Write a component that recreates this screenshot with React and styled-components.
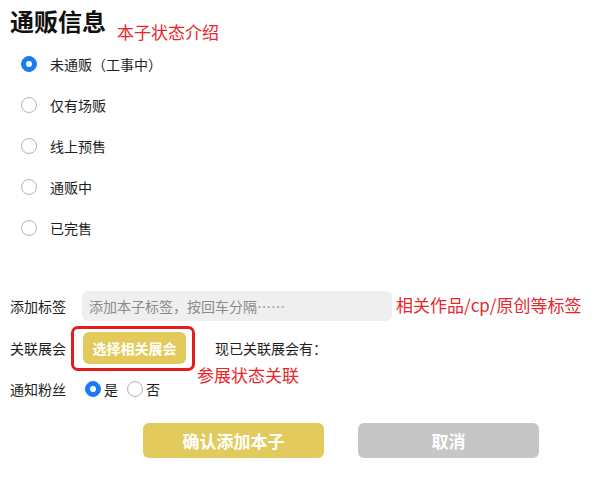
import React, { useState } from "react";
import styled, { createGlobalStyle } from "styled-components";

const GlobalStyle = createGlobalStyle`
  body {
    margin: 0;
    background: #ffffff;
    font-family: "Noto Sans CJK SC", "Noto Sans", sans-serif;
    color: #1e1e1e;
  }
`;

const Page = styled.div`
  width: 600px;
  height: 477px;
  padding: 6px 0 0 10px;
  box-sizing: border-box;
  overflow: hidden;
`;

const Header = styled.div`
  display: flex;
  align-items: flex-end;
  gap: 11px;
  height: 36px;
`;

const Title = styled.h1`
  margin: 0 0 6px;
  font-size: 24px;
  font-weight: 700;
  line-height: 30px;
  color: #111111;
`;

const Note = styled.span`
  color: #e8262b;
  font-size: 17px;
  line-height: 20px;
  white-space: nowrap;
`;

const StatusList = styled.div`
  display: flex;
  flex-direction: column;
  padding: 1px 0 0 11px;
`;

const StatusItem = styled.label`
  display: flex;
  align-items: center;
  gap: 13px;
  height: 41px;
  font-size: 14px;
`;

const Radio = styled.span`
  width: ${(p) => p.size}px;
  height: ${(p) => p.size}px;
  border-radius: 50%;
  box-sizing: border-box;
  flex-shrink: 0;
  background: ${(p) => (p.checked ? "#1a7cf5" : "#ffffff")};
  border: 1px solid ${(p) => (p.checked ? "#1a7cf5" : "#b4b4b4")};
  display: flex;
  align-items: center;
  justify-content: center;
  &::after {
    content: "";
    width: 6px;
    height: 6px;
    border-radius: 50%;
    background: #ffffff;
    display: ${(p) => (p.checked ? "block" : "none")};
  }
`;

const Form = styled.div`
  display: flex;
  flex-direction: column;
  margin-top: 43px;
`;

const Row = styled.div`
  position: relative;
  display: grid;
  grid-template-columns: 72px auto 1fr;
  align-items: center;
  height: ${(p) => p.h}px;
  font-size: 14px;
`;

const Label = styled.span`
  font-size: 14px;
  color: #1e1e1e;
`;

const TagInput = styled.input`
  width: 310px;
  height: 30px;
  border: none;
  border-radius: 6px;
  background: #efefef;
  padding: 0 7px;
  box-sizing: border-box;
  font-family: inherit;
  font-size: 14px;
  color: #222222;
  outline: none;
  &::placeholder {
    color: #8a8a8a;
  }
`;

const HighlightBox = styled.div`
  margin-left: -11px;
  border: 3px solid #e01e1e;
  border-radius: 7px;
  padding: 3px 6px 4px 9px;
`;

const YellowButton = styled.button`
  display: block;
  background: #e2cb5c;
  color: #ffffff;
  border: none;
  border-radius: 6px;
  font-family: inherit;
  font-weight: 700;
  font-size: ${(p) => (p.small ? 14 : 17)}px;
  width: ${(p) => (p.small ? 103 : 181)}px;
  height: ${(p) => (p.small ? 32 : 35)}px;
  padding: 0;
  cursor: pointer;
`;

const GrayButton = styled(YellowButton)`
  background: #c6c6c6;
`;

const Linked = styled.span`
  margin-left: 20px;
  font-size: 14px;
  color: #1e1e1e;
`;

const FloatNote = styled(Note)`
  position: absolute;
  left: ${(p) => p.left}px;
  top: ${(p) => p.top}px;
`;

const FanChoices = styled.div`
  display: flex;
  align-items: center;
  gap: 9px;
  margin-left: 3px;
`;

const FanOption = styled.label`
  display: flex;
  align-items: center;
  gap: 3px;
  font-size: 14px;
`;

const Actions = styled.div`
  display: flex;
  gap: 34px;
  margin: 20px 0 0 133px;
`;

const statuses = ["未通贩（工事中）", "仅有场贩", "线上预售", "通贩中", "已完售"];

export default function App() {
  const [status, setStatus] = useState(0);
  const [notify, setNotify] = useState(true);

  return (
    <Page>
      <GlobalStyle />
      <Header>
        <Title>通贩信息</Title>
        <Note>本子状态介绍</Note>
      </Header>
      <StatusList>
        {statuses.map((s, i) => (
          <StatusItem key={s} onClick={() => setStatus(i)}>
            <Radio size={16} checked={status === i} />
            {s}
          </StatusItem>
        ))}
      </StatusList>
      <Form>
        <Row h={30}>
          <Label>添加标签</Label>
          <TagInput placeholder="添加本子标签，按回车分隔……" />
          <FloatNote left={386} top={4}>
            相关作品/cp/原创等标签
          </FloatNote>
        </Row>
        <Row h={54}>
          <Label>关联展会</Label>
          <HighlightBox>
            <YellowButton small>选择相关展会</YellowButton>
          </HighlightBox>
          <Linked>现已关联展会有：</Linked>
          <FloatNote left={187} top={44}>
            参展状态关联
          </FloatNote>
        </Row>
        <Row h={28}>
          <Label>通知粉丝</Label>
          <FanChoices>
            <FanOption onClick={() => setNotify(true)}>
              <Radio size={16} checked={notify} />是
            </FanOption>
            <FanOption onClick={() => setNotify(false)}>
              <Radio size={16} checked={!notify} />否
            </FanOption>
          </FanChoices>
        </Row>
        <Actions>
          <YellowButton>确认添加本子</YellowButton>
          <GrayButton>取消</GrayButton>
        </Actions>
      </Form>
    </Page>
  );
}
